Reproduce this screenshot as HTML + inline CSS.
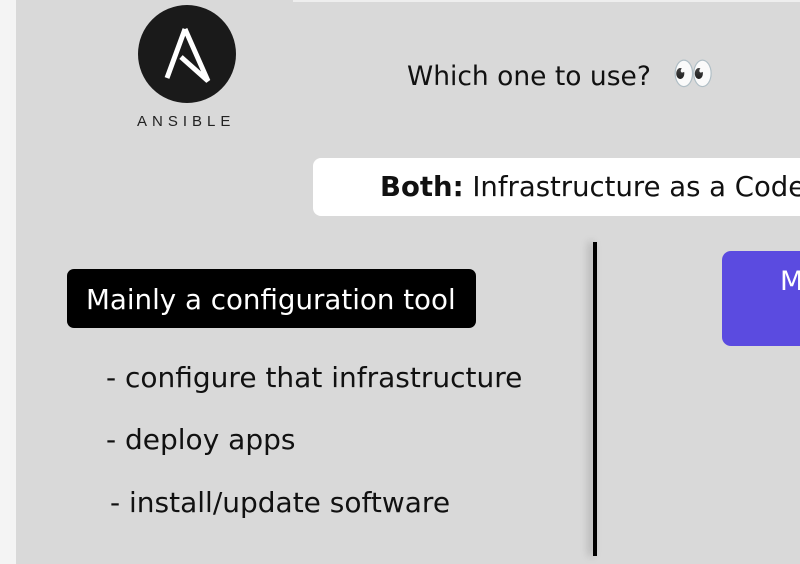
<!DOCTYPE html>
<html><head><style>
body{margin:0;width:800px;height:564px;overflow:hidden;background:#d9d9d9;font-family:"Liberation Sans","DejaVu Sans",sans-serif;position:relative}
.a{position:absolute}
.d{font-family:'DejaVu Sans',sans-serif;white-space:nowrap}
</style></head><body>
<div class="a" style="left:0;top:0;width:16px;height:564px;background:#f4f4f4"></div>
<div class="a" style="left:293px;top:0;width:507px;height:2px;background:#eee"></div>
<svg class="a" style="left:138px;top:5px" width="98" height="98" viewBox="0 0 98 98">
<circle cx="49" cy="49" r="49" fill="#1a1a1a"/>
<path d="M47 24 L29 73 M47 24 L70 76 L43 52" stroke="#fff" stroke-width="5" fill="none" stroke-linejoin="miter"/>
</svg>
<div class="a" style="left:137px;top:113px;font-size:15px;letter-spacing:5px;color:#222">ANSIBLE</div>
<div class="a d" style="left:407px;top:61px;font-size:26.5px;color:#111">Which one to use?</div>
<div class="a" style="left:672px;top:54px;font-size:34px;line-height:40px">👀</div>
<div class="a" style="left:313px;top:158px;width:500px;height:58px;background:#fff;border-radius:8px"></div>
<div class="a d" style="left:380px;top:171px;font-size:27.5px;color:#111"><b>Both:</b> Infrastructure as a Code</div>
<div class="a" style="left:722px;top:251px;width:100px;height:95px;background:#5b4be0;border-radius:9px"></div>
<div class="a d" style="left:780px;top:266px;font-size:27px;color:#fff">M</div>
<div class="a" style="left:593px;top:242px;width:4px;height:314px;background:#000;box-shadow:-4px 0 8px rgba(0,0,0,.25)"></div>
<div class="a" style="left:67px;top:269px;width:409px;height:59px;background:#000;border-radius:7px"></div>
<div class="a d" style="left:86px;top:283px;font-size:27.7px;color:#fff">Mainly a configuration tool</div>
<div class="a d" style="left:106px;top:361px;font-size:28px;color:#111">- configure that infrastructure</div>
<div class="a d" style="left:106px;top:423px;font-size:28px;color:#111">- deploy apps</div>
<div class="a d" style="left:110px;top:486px;font-size:28px;color:#111">- install/update software</div>
</body></html>
